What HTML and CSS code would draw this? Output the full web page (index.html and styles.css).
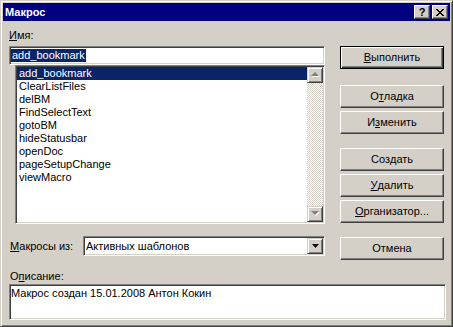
FILE: index.html
```html
<!DOCTYPE html>
<html>
<head>
<meta charset="utf-8">
<link rel="stylesheet" href="styles.css">
</head>
<body>
<div class="window">
  <div class="titlebar">
    <span class="title">Макрос</span>
    <div class="tb-buttons">
      <span class="tb-btn help">?</span>
      <span class="tb-btn">
        <svg width="8" height="7" viewBox="0 0 8 7"><path d="M0 0h2v1H0zM6 0h2v1H6zM1 1h2v1H1zM5 1h2v1H5zM2 2h4v1H2zM3 3h2v1H3zM2 4h4v1H2zM1 5h2v1H1zM5 5h2v1H5zM0 6h2v1H0zM6 6h2v1H6z" fill="#000"/></svg>
      </span>
    </div>
  </div>
  <div class="content">
    <div class="main">
      <div class="left">
        <div class="lbl name-lbl"><u>И</u>мя:</div>
        <div class="sunken name-field"><span class="sel">add_bookmark</span></div>
        <div class="sunken list">
          <ul class="items">
            <li class="active">add_bookmark</li>
            <li>ClearListFiles</li>
            <li>delBM</li>
            <li>FindSelectText</li>
            <li>gotoBM</li>
            <li>hideStatusbar</li>
            <li>openDoc</li>
            <li>pageSetupChange</li>
            <li>viewMacro</li>
          </ul>
          <div class="vscroll">
            <div class="raised sb-btn">
              <svg width="9" height="6" viewBox="0 0 9 6"><path d="M5 1l4 4H1z" fill="#fff"/><path d="M4 0l4 4H0z" fill="#808080"/></svg>
            </div>
            <div class="track"></div>
            <div class="raised sb-btn">
              <svg width="9" height="6" viewBox="0 0 9 6"><path d="M1 1h8L5 5z" fill="#fff"/><path d="M0 0h8L4 4z" fill="#808080"/></svg>
            </div>
          </div>
        </div>
        <div class="from-row">
          <div class="lbl from-lbl"><u>М</u>акросы из:</div>
          <div class="sunken combo">
            <span class="combo-text">Активных шаблонов</span>
            <div class="raised sb-btn">
              <svg width="7" height="4" viewBox="0 0 7 4"><path d="M0 0h7L3.5 4z" fill="#000"/></svg>
            </div>
          </div>
        </div>
      </div>
      <div class="right">
        <button class="btn default"><span><u>В</u>ыполнить</span></button>
        <button class="btn gap-lg1">О<u>т</u>ладка</button>
        <button class="btn gap-sm">И<u>з</u>менить</button>
        <button class="btn gap-md">Соз<u>д</u>ать</button>
        <button class="btn gap-sm"><u>У</u>далить</button>
        <button class="btn gap-sm"><u>О</u>рганизатор...</button>
        <button class="btn gap-md">Отмена</button>
      </div>
    </div>
    <div class="lbl desc-lbl">О<u>п</u>исание:</div>
    <div class="sunken desc">Макрос создан 15.01.2008 Антон Кокин</div>
  </div>
</div>
</body>
</html>
```

FILE: styles.css
```css
* { box-sizing: border-box; }
html, body { margin: 0; padding: 0; }
body {
  width: 453px;
  height: 327px;
  overflow: hidden;
  background: #d4d0c8;
  font-family: "Liberation Sans", Arial, sans-serif;
  font-size: 11px;
  color: #000;
}
u { text-decoration: underline; text-underline-offset: 1px; }

.window {
  width: 453px;
  height: 327px;
  border: 1px solid;
  border-color: #d4d0c8 #404040 #404040 #d4d0c8;
  box-shadow: inset 1px 1px #fff, inset -1px -1px #808080;
  padding: 2px;
  background: #d4d0c8;
  display: flex;
  flex-direction: column;
}

.titlebar {
  height: 18px;
  background: #000080;
  color: #fff;
  display: flex;
  align-items: center;
  justify-content: space-between;
  padding: 0 2px;
}
.title { font-weight: bold; font-size: 11px; line-height: 13px; }
.tb-buttons { display: flex; gap: 2px; }
.tb-btn {
  width: 16px;
  height: 14px;
  background: #d4d0c8;
  border: 1px solid;
  border-color: #fff #404040 #404040 #fff;
  box-shadow: inset -1px -1px #808080, inset 1px 1px #d4d0c8;
  display: flex;
  align-items: center;
  justify-content: center;
  color: #000;
}
.help { font-weight: bold; font-size: 11px; line-height: 11px; }

.content {
  flex: 1;
  display: flex;
  flex-direction: column;
  padding: 0 4px 0 6px;
}
.main { display: flex; }
.left { width: 316px; display: flex; flex-direction: column; }
.right {
  width: 104px;
  margin-left: 15px;
  padding-top: 25px;
  display: flex;
  flex-direction: column;
}

.lbl { line-height: 13px; height: 13px; white-space: nowrap; }
.name-lbl { margin-top: 8px; }

.sunken {
  background: #fff;
  border: 1px solid;
  border-color: #808080 #fff #fff #808080;
  box-shadow: inset 1px 1px #404040, inset -1px -1px #d4d0c8;
}
.raised {
  background: #d4d0c8;
  border: 1px solid;
  border-color: #d4d0c8 #404040 #404040 #d4d0c8;
  box-shadow: inset 1px 1px #fff, inset -1px -1px #808080;
}

.name-field {
  margin-top: 4px;
  height: 19px;
  padding: 2px 0 0 1px;
  line-height: 13px;
}
.sel { background: #0a246a; color: #fff; padding: 0 1px; display: inline-block; height: 13px; }

.list {
  margin-left: 6px;
  height: 159px;
  padding: 1px;
  display: flex;
}
.items {
  flex: 1;
  list-style: none;
  margin: 0;
  padding: 0;
}
.items li {
  height: 13px;
  line-height: 13px;
  padding-left: 2px;
  white-space: nowrap;
}
.items li.active { background: #0a246a; color: #fff; }

.vscroll { width: 16px; display: flex; flex-direction: column; }
.sb-btn {
  width: 16px;
  height: 16px;
  flex: none;
  display: flex;
  align-items: center;
  justify-content: center;
}
.track {
  flex: 1;
  background: repeating-conic-gradient(#fff 0 25%, #d4d0c8 0 50%) 0 0 / 2px 2px;
}

.from-row {
  margin-top: 12px;
  height: 20px;
  display: flex;
  align-items: center;
}
.from-lbl { padding-left: 1px; }
.combo {
  margin-left: auto;
  width: 242px;
  height: 20px;
  padding: 1px;
  display: flex;
  align-items: center;
}
.combo-text { flex: 1; padding-left: 1px; line-height: 13px; }

.btn {
  width: 104px;
  height: 23px;
  padding: 0;
  margin: 0;
  font: inherit;
  color: #000;
  background: #d4d0c8;
  border: 1px solid;
  border-color: #fff #404040 #404040 #fff;
  box-shadow: inset -1px -1px #808080, inset 1px 1px #d4d0c8;
  display: flex;
  align-items: center;
  justify-content: center;
  line-height: 13px;
}
.btn.default {
  border-color: #000;
  box-shadow: inset 1px 1px #fff, inset -1px -1px #404040, inset -2px -2px #808080;
}
.gap-lg1 { margin-top: 16px; }
.gap-sm { margin-top: 3px; }
.gap-md { margin-top: 14px; }

.desc-lbl { margin-top: 10px; padding-left: 1px; }
.desc {
  margin-top: 1px;
  height: 36px;
  padding: 2px 1px;
  line-height: 13px;
}
```
